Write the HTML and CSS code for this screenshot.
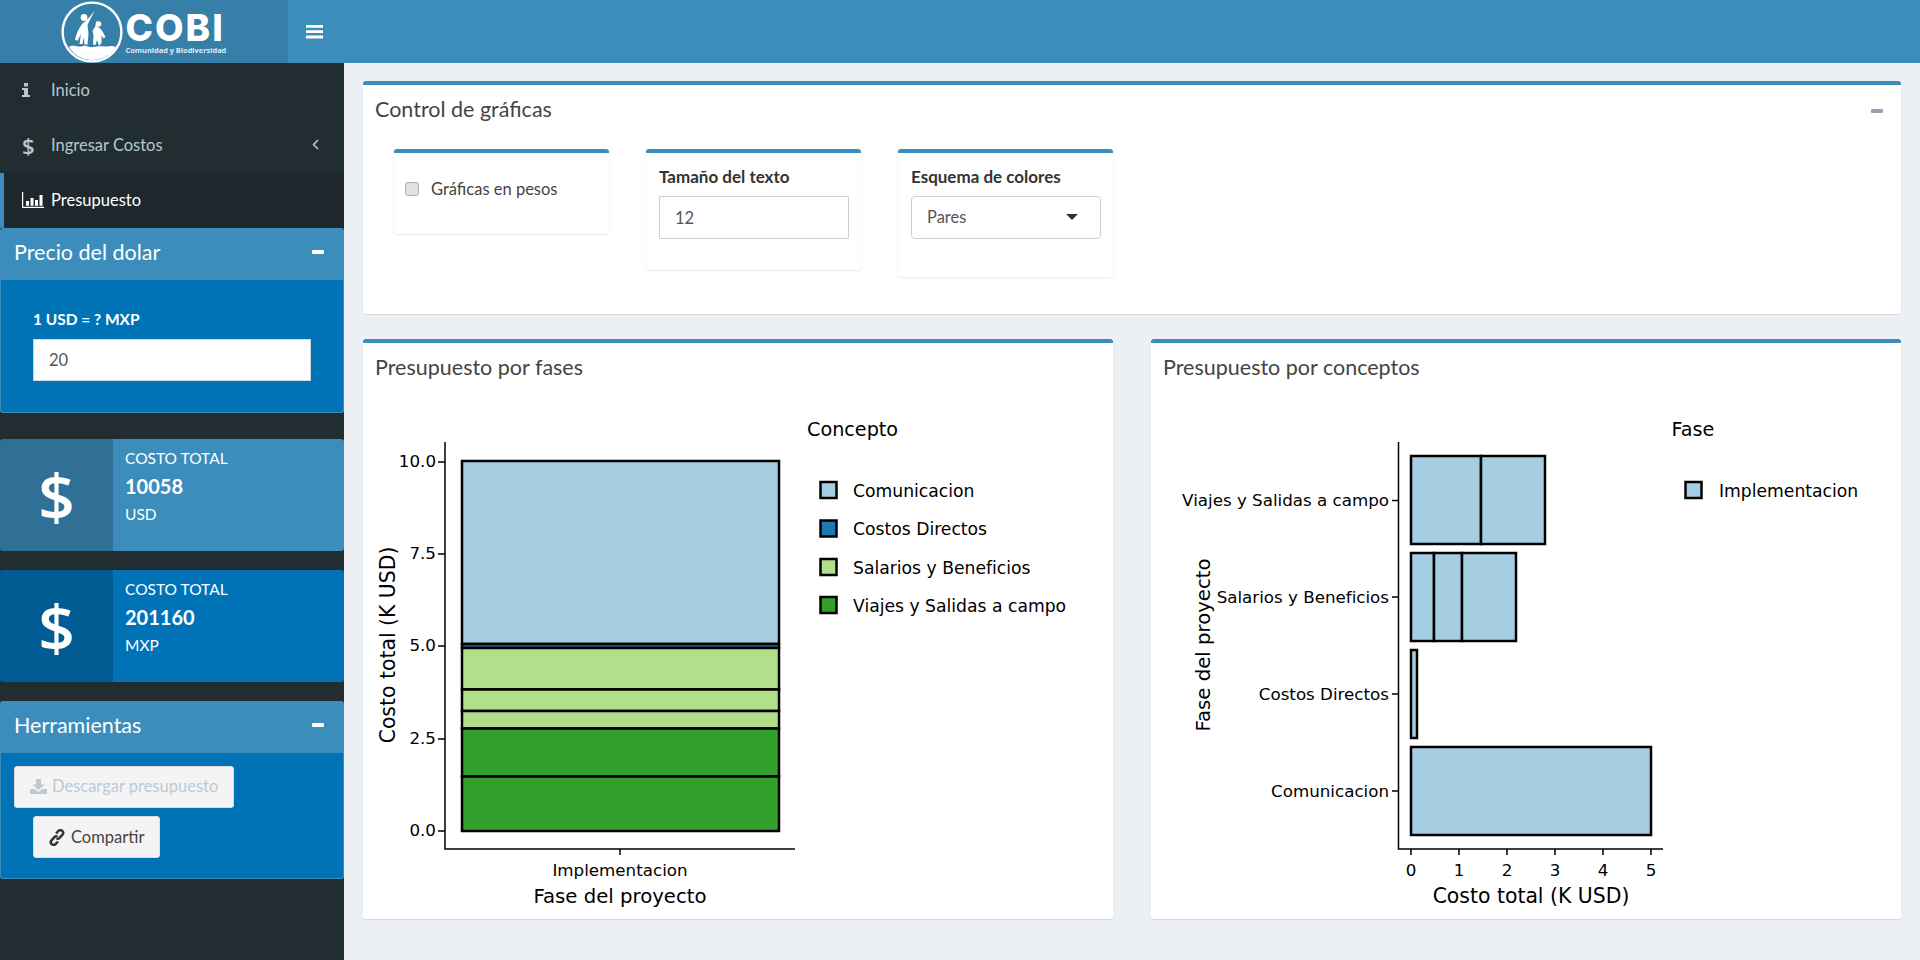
FILE: index.html
```html
<!DOCTYPE html>
<html lang="es">
<head>
  <meta charset="UTF-8">
  <title>COBI - Presupuesto</title>
  <link rel="stylesheet" href="styles.css">
</head>
<body>

  <header class="topbar">
    <a class="logo">
      <svg class="logo-mark" width="62" height="62" viewBox="5 1 62 62">
        <circle cx="36" cy="32" r="29.4" fill="none" stroke="#fff" stroke-width="2.4"/>
        <circle cx="28" cy="17.5" r="3.4" fill="#fff"/>
        <circle cx="42.5" cy="24" r="2.8" fill="#fff"/>
        <path fill="#fff" d="M38.5 10.5 C36 16 33.5 21 31.5 25 L32.5 34 L31.5 44.5 L28.5 44.5 L28 37 L26.5 44 L23.5 44 L25 34 L21.5 41 L19 39.5 C20.5 33 23 28 26.5 23.5 C31 20.5 35 15.5 38.5 10.5Z"/>
        <path fill="#fff" d="M41 20 L41.5 27 C45 28 47 32 49.5 37 L47.5 38.5 L45.5 35.5 L45.5 43 L43 46 L41 40 L39.5 45 L37 44.5 L37.5 35 L36.5 31 L39 27Z"/>
        <path fill="#fff" d="M13 47 C18 44 22 48 27 46 C31 45 33 48 37 47 C41 46 44 46 48 46.5 C53 47 56 45 60 47 C56 54 47 60 36 60 C26 60 17 54 13 47Z"/>
      </svg>
      <span class="logo-text">
        <span class="logo-name">COBI</span>
        <span class="logo-sub">Comunidad y Biodiversidad</span>
      </span>
    </a>
    <a class="menu-toggle">
      <svg width="17" height="14" viewBox="0 0 17 14"><path fill="#fff" d="M0 0h17v2.800H0zM0 5.300h17v2.800H0zM0 10.600h17v2.800H0z"/></svg>
    </a>
  </header>

  <div class="wrapper">
    <aside class="sidebar">
      <ul class="menu">
        <li class="menu-item">
          <span class="menu-icon">
            <svg width="8" height="14" viewBox="0 0 8 14"><path fill="currentColor" d="M2 0h4v3.400H2zM0 5h6v7h2v2H0v-2h2V7H0z"/></svg>
          </span>
          Inicio
        </li>
        <li class="menu-item">
          <span class="menu-icon menu-dollar">$</span>
          Ingresar Costos
          <svg class="menu-caret" width="7" height="11" viewBox="0 0 7 11"><path fill="none" stroke="currentColor" stroke-width="1.6" d="M6 1 L1.500 5.500 L6 10"/></svg>
        </li>
        <li class="menu-item active">
          <span class="menu-icon">
            <svg width="22" height="16" viewBox="0 0 22 16"><path fill="currentColor" d="M0 0h1.200v14.800H22V16H0zM4 9h3v4.800H4zM8.500 6h3v7.800h-3zM13 8h3v5.800h-3zM17.500 3h3v10.800h-3z"/></svg>
          </span>
          Presupuesto
        </li>
      </ul>

      <section class="side-box">
        <div class="side-box-head">
          <h3>Precio del dolar</h3>
          <span class="side-minus"></span>
        </div>
        <div class="side-box-body price-body">
          <label class="price-label" for="usd">1 USD = ? MXP</label>
          <input class="price-input" id="usd" type="text" value="20">
        </div>
      </section>

      <div class="value-box value-light">
        <div class="value-icon">$</div>
        <div class="value-text">
          <span>COSTO TOTAL</span>
          <b>10058</b>
          <span>USD</span>
        </div>
      </div>

      <div class="value-box value-dark">
        <div class="value-icon">$</div>
        <div class="value-text">
          <span>COSTO TOTAL</span>
          <b>201160</b>
          <span>MXP</span>
        </div>
      </div>

      <section class="side-box tools">
        <div class="side-box-head">
          <h3>Herramientas</h3>
          <span class="side-minus"></span>
        </div>
        <div class="side-box-body tools-body">
          <a class="btn btn-disabled">
            <svg width="17" height="15" viewBox="0 0 17 15"><path fill="currentColor" d="M6 0h5v5.500h3.500L8.500 11 2.500 5.500H6zM0 10h4.500l4 3 4-3H17v5H0z"/></svg>
            Descargar presupuesto
          </a>
          <a class="btn btn-share">
            <svg width="16" height="17" viewBox="0 0 16 17"><g fill="none" stroke="#333" stroke-width="2.500"><path d="M7 4.500 L9.500 1.900 C10.500 .9 12 .9 13.300 1.900 C14.500 3.100 14.500 4.500 13.500 5.600 L10.300 9.100 C9.500 9.900 8.300 9.900 7.500 9.300"/><path d="M9 12.500 L6.500 15.100 C5.500 16.100 4 16.100 2.700 15.100 C1.500 13.900 1.500 12.500 2.500 11.400 L5.700 7.900 C6.500 7.100 7.700 7.100 8.500 7.700"/></g></svg>
            Compartir
          </a>
        </div>
      </section>
    </aside>

    <main class="content">
      <section class="box control-box">
        <h3 class="box-title">Control de gráficas</h3>
        <span class="box-minus"></span>
        <div class="control-row">
          <div class="mini-box mini-check">
            <label class="check-label"><input type="checkbox"> Gráficas en pesos</label>
          </div>
          <div class="mini-box mini-size">
            <label class="field-label" for="size">Tamaño del texto</label>
            <input class="field-input" id="size" type="text" value="12">
          </div>
          <div class="mini-box mini-scheme">
            <span class="field-label">Esquema de colores</span>
            <div class="field-select">Pares <span class="select-arrow"></span></div>
          </div>
        </div>
      </section>

      <div class="chart-row">
        <section class="box chart-box">
          <h3 class="box-title">Presupuesto por fases</h3>
          <svg class="chart chart-left" width="751" height="519" viewBox="0 0 751 519">
            <g stroke="#000" stroke-width="2.500">
              <rect x="100" y="61" width="317" height="183" fill="#a6cee3"/>
              <rect x="100" y="244" width="317" height="4" fill="#1f78b4"/>
              <rect x="100" y="248" width="317" height="41.500" fill="#b2df8a"/>
              <rect x="100" y="289.500" width="317" height="21.500" fill="#b2df8a"/>
              <rect x="100" y="311" width="317" height="17.500" fill="#b2df8a"/>
              <rect x="100" y="328.500" width="317" height="48" fill="#33a02c"/>
              <rect x="100" y="376.500" width="317" height="54.500" fill="#33a02c"/>
            </g>
            <g stroke="#000" stroke-width="1.500" fill="none">
              <path d="M83 42V449H433"/>
              <path d="M76 62h7M76 154h7M76 246h7M76 339h7M76 431h7M258 449v6"/>
            </g>
            <g class="tick" text-anchor="end">
              <text x="74" y="67">10.0</text>
              <text x="74" y="159">7.5</text>
              <text x="74" y="251">5.0</text>
              <text x="74" y="344">2.5</text>
              <text x="74" y="436">0.0</text>
            </g>
            <text class="tick" x="258" y="476" text-anchor="middle">Implementacion</text>
            <text class="axis" x="258" y="503" text-anchor="middle">Fase del proyecto</text>
            <text class="axis-cost" transform="translate(33 245) rotate(-90)" text-anchor="middle">Costo total (K USD)</text>
            <text class="legend-title" x="445" y="36">Concepto</text>
            <g stroke="#000" stroke-width="2.500">
              <rect x="458.500" y="82" width="16" height="16" fill="#a6cee3"/>
              <rect x="458.500" y="120.500" width="16" height="16" fill="#1f78b4"/>
              <rect x="458.500" y="159" width="16" height="16" fill="#b2df8a"/>
              <rect x="458.500" y="197" width="16" height="16" fill="#33a02c"/>
            </g>
            <g class="legend-label">
              <text x="491" y="97">Comunicacion</text>
              <text x="491" y="135">Costos Directos</text>
              <text x="491" y="174">Salarios y Beneficios</text>
              <text x="491" y="212">Viajes y Salidas a campo</text>
            </g>
          </svg>
        </section>

        <section class="box chart-box">
          <h3 class="box-title">Presupuesto por conceptos</h3>
          <svg class="chart" width="750" height="519" viewBox="0 0 750 519">
            <g stroke="#000" stroke-width="2.500" fill="#a6cee3">
              <rect x="260" y="56" width="70" height="88"/>
              <rect x="330" y="56" width="64" height="88"/>
              <rect x="260" y="153" width="23" height="88"/>
              <rect x="283" y="153" width="28" height="88"/>
              <rect x="311" y="153" width="54" height="88"/>
              <rect x="260" y="250" width="6" height="88"/>
              <rect x="260" y="347" width="240" height="88"/>
            </g>
            <g stroke="#000" stroke-width="1.500" fill="none">
              <path d="M247.500 42V449H512"/>
              <path d="M241 100.500h6.500M241 197h6.500M241 294h6.500M241 391h6.500"/>
              <path d="M260 449v6M308 449v6M356 449v6M404 449v6M452 449v6M500 449v6"/>
            </g>
            <g class="tick" text-anchor="end">
              <text x="238" y="106">Viajes y Salidas a campo</text>
              <text x="238" y="203">Salarios y Beneficios</text>
              <text x="238" y="300">Costos Directos</text>
              <text x="238" y="397">Comunicacion</text>
            </g>
            <g class="tick" text-anchor="middle">
              <text x="260" y="476">0</text>
              <text x="308" y="476">1</text>
              <text x="356" y="476">2</text>
              <text x="404" y="476">3</text>
              <text x="452" y="476">4</text>
              <text x="500" y="476">5</text>
            </g>
            <text class="axis-cost" x="380" y="503" text-anchor="middle">Costo total (K USD)</text>
            <text class="axis" transform="translate(59 245) rotate(-90)" text-anchor="middle">Fase del proyecto</text>
            <text class="legend-title" x="520.500" y="36">Fase</text>
            <rect x="534.500" y="82" width="16" height="16" fill="#a6cee3" stroke="#000" stroke-width="2.500"/>
            <text class="legend-label" x="568" y="97">Implementacion</text>
          </svg>
        </section>
      </div>
    </main>
  </div>

</body>
</html>
```

FILE: styles.css
```css
* {
  box-sizing: border-box;
}

body {
  margin: 0;
  height: 960px;
  overflow: hidden;
  font-family: "Lato", "Open Sans", sans-serif;
  font-size: 16.5px;
  color: #333;
  background: #ecf0f5;
}

/* Header */
.topbar {
  display: flex;
  height: 63px;
  background: #3c8dbc;
}

.logo {
  display: flex;
  align-items: center;
  justify-content: center;
  gap: 3px;
  width: 288px;
  background: #367fa9;
  color: #fff;
}

.logo-text {
  display: flex;
  flex-direction: column;
  width: 102px;
}

.logo-name {
  font-family: "Inter", sans-serif;
  font-weight: 800;
  font-size: 37px;
  line-height: 37px;
  letter-spacing: 2px;
}

.logo-sub {
  font-family: "Open Sans", sans-serif;
  font-weight: 700;
  font-size: 7.4px;
  line-height: 9px;
  white-space: nowrap;
  opacity: .85;
}

.menu-toggle {
  display: flex;
  align-items: center;
  padding: 0 18px;
}

/* Sidebar */
.wrapper {
  display: flex;
  height: 897px;
}

.sidebar {
  width: 344px;
  flex-shrink: 0;
  background: #222d32;
}

.menu {
  list-style: none;
  margin: 0;
  padding: 0;
}

.menu-item {
  display: flex;
  align-items: center;
  height: 55px;
  padding: 0 0 2px 22px;
  color: #b8c7ce;
}

.menu-item.active {
  padding-left: 18px;
  border-left: 4px solid #3c8dbc;
  background: #1e282c;
  color: #fff;
}

.menu-icon {
  display: flex;
  justify-content: flex-start;
  width: 29px;
  flex-shrink: 0;
}

.menu-dollar {
  font-family: "Open Sans", sans-serif;
  font-weight: 600;
  font-size: 22px;
}

.menu-caret {
  margin-left: auto;
  margin-right: 25px;
}

.side-box-head {
  display: flex;
  align-items: center;
  justify-content: space-between;
  height: 52px;
  padding: 0 20px 4px 14px;
  background: #3c8dbc;
  border-radius: 3px 3px 0 0;
  color: #fff;
}

.side-box-head h3 {
  margin: 0;
  font-size: 21.5px;
  font-weight: 400;
}

.side-minus {
  width: 12px;
  height: 4px;
  border-radius: 1px;
  background: #fff;
}

.side-box-body {
  background: #0073b7;
  border: 1px solid #3c8dbc;
  border-top: 0;
  border-radius: 0 0 3px 3px;
  color: #fff;
}

.price-body {
  height: 133px;
  padding: 28px 32px 0;
}

.price-label {
  display: block;
  margin-bottom: 9px;
  font-weight: 700;
  font-size: 15.5px;
  line-height: 22px;
}

.price-input {
  display: block;
  width: 278px;
  height: 42px;
  padding: 0 15px;
  border: 1px solid #d2d6de;
  font: inherit;
  color: #555;
}

/* Value boxes */
.value-box {
  display: flex;
  height: 112px;
  margin-top: 19px;
  border-radius: 3px;
  color: #fff;
}

.value-light {
  margin-top: 26px;
  background: #3c8dbc;
}

.value-dark {
  background: #0073b7;
}

.value-icon {
  display: flex;
  align-items: center;
  justify-content: center;
  width: 113px;
  font-family: "Open Sans", sans-serif;
  font-weight: 600;
  font-size: 64px;
  background: rgba(0, 0, 0, .2);
  border-radius: 3px 0 0 3px;
}

.value-text {
  display: flex;
  flex-direction: column;
  padding: 5px 12px;
  font-size: 15.5px;
  line-height: 28px;
}

.value-text b {
  font-size: 20px;
}

/* Tools */
.tools {
  margin-top: 19px;
}

.tools-body {
  height: 126px;
  padding-top: 13px;
}

.btn {
  display: flex;
  align-items: center;
  gap: 5px;
  width: max-content;
  height: 42px;
  padding: 0 15px 2px;
  background: #f4f4f4;
  border: 1px solid #ddd;
  border-radius: 3px;
}

.btn-disabled {
  margin-left: 13px;
  color: #bccad5;
}

.btn-share {
  gap: 6px;
  margin: 8px 0 0 32px;
  padding-bottom: 0;
  color: #444;
}

/* Main */
.content {
  flex: 1;
  padding: 18px 19px;
}

.box {
  position: relative;
  background: #fff;
  border-top: 4px solid #3c8dbc;
  border-radius: 3px;
  box-shadow: 0 1px 1px rgba(0, 0, 0, .1);
}

.box-title {
  margin: 0;
  padding: 10px 12px 0;
  font-size: 21.5px;
  line-height: 28px;
  font-weight: 400;
  color: #444;
}

.box-minus {
  position: absolute;
  top: 24px;
  right: 18px;
  width: 12px;
  height: 4px;
  border-radius: 1px;
  background: #97a0b3;
}

.control-box {
  height: 233px;
}

.control-row {
  display: flex;
  align-items: flex-start;
  gap: 37px;
  padding: 26px 31px 0;
}

.mini-box {
  width: 215px;
  padding: 0 13px;
  background: #fff;
  border-top: 4px solid #3c8dbc;
  border-radius: 3px;
  box-shadow: 0 1px 2px rgba(0, 0, 0, .1);
}

.mini-check {
  height: 85px;
  padding: 26px 11px 0;
}

.mini-size {
  height: 121px;
  padding-top: 13px;
}

.mini-scheme {
  height: 128px;
  padding-top: 13px;
}

.check-label {
  display: flex;
  align-items: center;
  gap: 12px;
  color: #444;
}

.check-label input {
  appearance: none;
  width: 14px;
  height: 14px;
  margin: 0;
  background: #e2e2e2;
  border: 1px solid #adadad;
  border-radius: 3px;
}

.field-label {
  display: block;
  margin-bottom: 8px;
  font-weight: 700;
  font-size: 17px;
  line-height: 22px;
}

.field-input,
.field-select {
  display: flex;
  align-items: center;
  width: 190px;
  height: 43px;
  padding: 0 15px;
  border: 1px solid #cdd0d8;
  background: #fff;
  font: inherit;
  color: #555;
}

.field-select {
  justify-content: space-between;
  padding-bottom: 2px;
  border-radius: 4px;
}

.select-arrow {
  margin-right: 7px;
  border-left: 6px solid transparent;
  border-right: 6px solid transparent;
  border-top: 6px solid #333;
}

.chart-row {
  display: flex;
  gap: 38px;
  margin-top: 25px;
}

.chart-box {
  width: 750px;
  height: 580px;
}

.chart {
  display: block;
  margin-top: 19px;
}

.chart-left {
  margin-left: -1px;
}

.tick {
  font-family: "DejaVu Sans", sans-serif;
  font-size: 16.7px;
  fill: #000;
}

.legend-label {
  font-family: "DejaVu Sans", sans-serif;
  font-size: 17.2px;
  fill: #000;
}

.axis {
  font-family: "DejaVu Sans", sans-serif;
  font-size: 19.7px;
  fill: #000;
}

.axis-cost {
  font-family: "DejaVu Sans", sans-serif;
  font-size: 20.4px;
  fill: #000;
}

.legend-title {
  font-family: "DejaVu Sans", sans-serif;
  font-size: 19.2px;
  fill: #000;
}
```
